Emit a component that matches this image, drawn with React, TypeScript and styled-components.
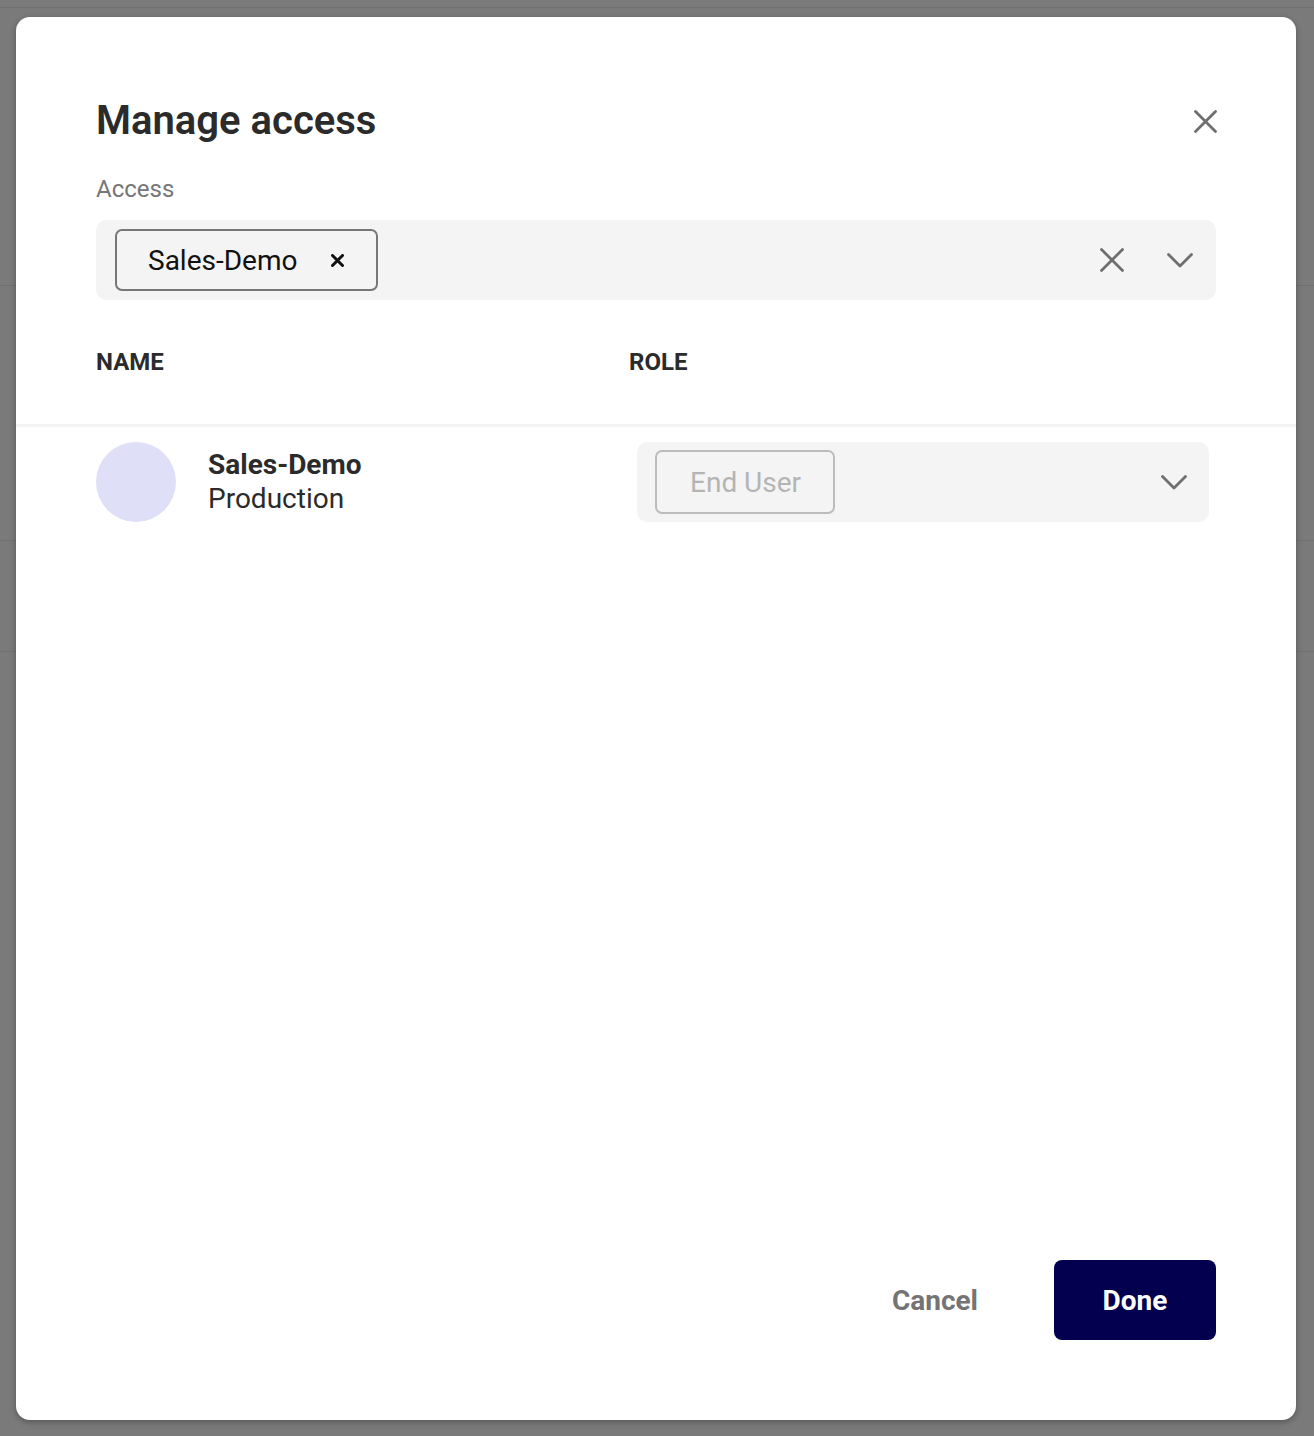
import React from 'react'
import styled, { createGlobalStyle } from 'styled-components'

const GlobalStyle = createGlobalStyle`
  html, body { margin: 0; padding: 0; }
  body {
    font-family: Roboto, "Liberation Sans", Arial, sans-serif;
    background: #fff;
    color: #2b2b2b;
  }
  * { box-sizing: border-box; }
`

const Page = styled.div`
  position: relative;
  height: 1436px;
  overflow: hidden;
`

const PageBand = styled.div<{ $h: number }>`
  height: ${p => p.$h}px;
  border-bottom: 1px solid #ebebeb;
`

const Overlay = styled.div`
  position: absolute;
  inset: 0;
  background: rgba(0, 0, 0, 0.52);
  display: flex;
  padding: 17px 18px 16px 16px;
`

const Modal = styled.div`
  flex: 1;
  background: #fff;
  border-radius: 14px;
  box-shadow: 0 2px 6px rgba(0, 0, 0, 0.3);
  padding: 80px 79px 80px 80px;
  display: flex;
  flex-direction: column;
`

const TitleRow = styled.div`
  display: flex;
  align-items: center;
  justify-content: space-between;
`

const Title = styled.h1`
  margin: 0;
  font-size: 40px;
  line-height: 48px;
  font-weight: 600;
  color: #2b2b2b;
`

const IconButton = styled.button`
  border: 0;
  background: none;
  padding: 0;
  display: flex;
  align-items: center;
  justify-content: center;
  color: #6e6e6e;
  cursor: pointer;
`

const Label = styled.div`
  margin-top: 28px;
  font-size: 24px;
  line-height: 32px;
  color: #767676;
`

const SelectBox = styled.div<{ $inset?: number }>`
  height: 80px;
  background: #f4f4f4;
  border-radius: 10px;
  display: flex;
  align-items: center;
  margin: 0 ${p => p.$inset ?? 0}px;
`

const AccessSelect = styled(SelectBox)`
  margin-top: 15px;
  margin-right: 1px;
  padding: 0 23px 0 19px;
`

const RoleSelect = styled(SelectBox)`
  padding: 0 22px 0 18px;
`

const Chip = styled.div<{ $muted?: boolean }>`
  display: flex;
  align-items: center;
  height: ${p => (p.$muted ? 64 : 62)}px;
  border: 2px solid ${p => (p.$muted ? '#bcbcbc' : '#777')};
  border-radius: 7px;
  padding: ${p => (p.$muted ? '0 32px 0 33px' : '0 32px 0 31px')};
  font-size: 28px;
  color: ${p => (p.$muted ? '#b4b4b4' : '#111')};
  gap: 34px;
`

const Spacer = styled.div`
  flex: 1;
`

const Controls = styled.div`
  display: flex;
  align-items: center;
  gap: 43px;
  color: #6e6e6e;
`

const TableHead = styled.div`
  display: grid;
  grid-template-columns: 533px 1fr;
  margin: 40px -79px 0 -80px;
  padding: 0 79px 40px 80px;
  border-bottom: 3px solid #f4f4f4;
  font-size: 24px;
  line-height: 44px;
  font-weight: 700;
  text-transform: uppercase;
  color: #2b2b2b;
`

const TableRow = styled.div`
  display: grid;
  grid-template-columns: 533px 1fr;
  padding-top: 15px;
`

const NameCell = styled.div`
  display: flex;
  align-items: center;
  gap: 32px;
`

const Avatar = styled.div`
  width: 80px;
  height: 80px;
  border-radius: 50%;
  background: #dfdff7;
`

const NameLines = styled.div`
  font-size: 28px;
  line-height: 34px;
  color: #2b2b2b;
`

const NameMain = styled.div`
  font-weight: 700;
`

const Footer = styled.div`
  margin-top: auto;
  margin-right: 1px;
  display: flex;
  justify-content: flex-end;
  align-items: center;
  gap: 76px;
`

const TextButton = styled.button`
  border: 0;
  background: none;
  padding: 0;
  font-family: inherit;
  font-size: 28px;
  font-weight: 700;
  color: #747474;
  cursor: pointer;
`

const PrimaryButton = styled.button`
  width: 162px;
  height: 80px;
  border: 0;
  border-radius: 8px;
  background: #02004f;
  color: #fff;
  font-family: inherit;
  font-size: 28px;
  font-weight: 700;
  cursor: pointer;
`

const CrossIcon = ({ size, stroke = 2.8 }: { size: number; stroke?: number }) => (
  <svg width={size} height={size} viewBox={`0 0 ${size} ${size}`} fill="none">
    <path
      d={`M1.5 1.5L${size - 1.5} ${size - 1.5}M${size - 1.5} 1.5L1.5 ${size - 1.5}`}
      stroke="currentColor"
      strokeWidth={stroke}
      strokeLinecap="round"
    />
  </svg>
)

const ChevronIcon = () => (
  <svg width="26" height="15" viewBox="0 0 26 15" fill="none">
    <path d="M1.5 1.5L13 13L24.5 1.5" stroke="currentColor" strokeWidth={2.8} strokeLinecap="round" strokeLinejoin="round" />
  </svg>
)

const ChipRemove = () => (
  <svg width="13" height="13" viewBox="0 0 13 13" fill="none">
    <path d="M1.5 1.5L11.5 11.5M11.5 1.5L1.5 11.5" stroke="#111" strokeWidth={3} strokeLinecap="round" />
  </svg>
)

const bands = [8, 278, 255, 111]

export default function App() {
  return (
    <>
      <GlobalStyle />
      <Page>
        {bands.map((h, i) => (
          <PageBand key={i} $h={h} />
        ))}
        <Overlay>
          <Modal>
            <TitleRow>
              <Title>Manage access</Title>
              <IconButton aria-label="Close">
                <CrossIcon size={23} />
              </IconButton>
            </TitleRow>
            <Label>Access</Label>
            <AccessSelect>
              <Chip>
                <span>Sales-Demo</span>
                <ChipRemove />
              </Chip>
              <Spacer />
              <Controls>
                <CrossIcon size={24} />
                <ChevronIcon />
              </Controls>
            </AccessSelect>

            <TableHead>
              <div>Name</div>
              <div>Role</div>
            </TableHead>
            <TableRow>
              <NameCell>
                <Avatar />
                <NameLines>
                  <NameMain>Sales-Demo</NameMain>
                  <div>Production</div>
                </NameLines>
              </NameCell>
              <RoleSelect $inset={8}>
                <Chip $muted>End User</Chip>
                <Spacer />
                <Controls>
                  <ChevronIcon />
                </Controls>
              </RoleSelect>
            </TableRow>

            <Footer>
              <TextButton>Cancel</TextButton>
              <PrimaryButton>Done</PrimaryButton>
            </Footer>
          </Modal>
        </Overlay>
      </Page>
    </>
  )
}
